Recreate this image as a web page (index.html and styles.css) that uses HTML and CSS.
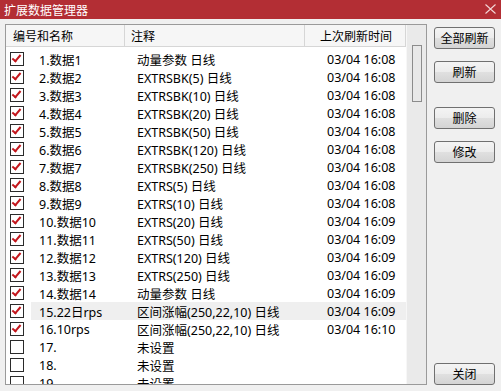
FILE: index.html
```html
<!DOCTYPE html>
<html>
<head>
<meta charset="utf-8">
<link rel="stylesheet" href="styles.css">
</head>
<body>
<div class="win">
  <div class="titlebar">
    <span class="title">扩展数据管理器</span>
    <svg class="close" width="11" height="10" viewBox="0 0 11 10"><path d="M0.5 0.5 L10.5 9.5 M10.5 0.5 L0.5 9.5" stroke="#f3d6d6" stroke-width="1.1" fill="none"/></svg>
  </div>
  <div class="client">
    <div class="list">
      <div class="main">
        <div class="header">
          <div class="hc c1">编号和名称</div>
          <div class="hc c2">注释</div>
          <div class="hc c3">上次刷新时间</div>
        </div>
        <div class="rows">
          <div class="row"><span class="cb on"></span><div class="rest"><span class="name">1.数据1</span><span class="note">动量参数 日线</span><span class="time">03/04 16:08</span></div></div>
          <div class="row"><span class="cb on"></span><div class="rest"><span class="name">2.数据2</span><span class="note">EXTRSBK(5) 日线</span><span class="time">03/04 16:08</span></div></div>
          <div class="row"><span class="cb on"></span><div class="rest"><span class="name">3.数据3</span><span class="note">EXTRSBK(10) 日线</span><span class="time">03/04 16:08</span></div></div>
          <div class="row"><span class="cb on"></span><div class="rest"><span class="name">4.数据4</span><span class="note">EXTRSBK(20) 日线</span><span class="time">03/04 16:08</span></div></div>
          <div class="row"><span class="cb on"></span><div class="rest"><span class="name">5.数据5</span><span class="note">EXTRSBK(50) 日线</span><span class="time">03/04 16:08</span></div></div>
          <div class="row"><span class="cb on"></span><div class="rest"><span class="name">6.数据6</span><span class="note">EXTRSBK(120) 日线</span><span class="time">03/04 16:08</span></div></div>
          <div class="row"><span class="cb on"></span><div class="rest"><span class="name">7.数据7</span><span class="note">EXTRSBK(250) 日线</span><span class="time">03/04 16:08</span></div></div>
          <div class="row"><span class="cb on"></span><div class="rest"><span class="name">8.数据8</span><span class="note">EXTRS(5) 日线</span><span class="time">03/04 16:08</span></div></div>
          <div class="row"><span class="cb on"></span><div class="rest"><span class="name">9.数据9</span><span class="note">EXTRS(10) 日线</span><span class="time">03/04 16:08</span></div></div>
          <div class="row"><span class="cb on"></span><div class="rest"><span class="name">10.数据10</span><span class="note">EXTRS(20) 日线</span><span class="time">03/04 16:09</span></div></div>
          <div class="row"><span class="cb on"></span><div class="rest"><span class="name">11.数据11</span><span class="note">EXTRS(50) 日线</span><span class="time">03/04 16:09</span></div></div>
          <div class="row"><span class="cb on"></span><div class="rest"><span class="name">12.数据12</span><span class="note">EXTRS(120) 日线</span><span class="time">03/04 16:09</span></div></div>
          <div class="row"><span class="cb on"></span><div class="rest"><span class="name">13.数据13</span><span class="note">EXTRS(250) 日线</span><span class="time">03/04 16:09</span></div></div>
          <div class="row"><span class="cb on"></span><div class="rest"><span class="name">14.数据14</span><span class="note">动量参数 日线</span><span class="time">03/04 16:09</span></div></div>
          <div class="row"><span class="cb on"></span><div class="rest hot"><span class="name">15.22日rps</span><span class="note">区间涨幅(250,22,10) 日线</span><span class="time">03/04 16:09</span></div></div>
          <div class="row"><span class="cb on"></span><div class="rest"><span class="name">16.10rps</span><span class="note">区间涨幅(250,22,10) 日线</span><span class="time">03/04 16:10</span></div></div>
          <div class="row"><span class="cb"></span><div class="rest"><span class="name">17.</span><span class="note">未设置</span><span class="time"></span></div></div>
          <div class="row"><span class="cb"></span><div class="rest"><span class="name">18.</span><span class="note">未设置</span><span class="time"></span></div></div>
          <div class="row"><span class="cb"></span><div class="rest"><span class="name">19.</span><span class="note">未设置</span><span class="time"></span></div></div>
        </div>
      </div>
      <div class="vscroll"><div class="thumb"></div></div>
    </div>
    <div class="buttons">
      <div class="btn">全部刷新</div>
      <div class="btn g12">刷新</div>
      <div class="btn g24">删除</div>
      <div class="btn g12">修改</div>
      <div class="btn last">关闭</div>
    </div>
  </div>
</div>
</body>
</html>
```
FILE: styles.css
```css
html, body {
  margin: 0;
  padding: 0;
  width: 501px;
  height: 391px;
  overflow: hidden;
  background: #f0f0f0;
  font-family: "Noto Sans", "Noto Sans CJK SC", sans-serif;
  font-size: 12.5px;
  color: #000;
}
.win {
  width: 501px;
  height: 391px;
  display: flex;
  flex-direction: column;
}
.titlebar {
  height: 19px;
  flex: none;
  background: #b32e34;
  display: flex;
  align-items: center;
  padding: 0 5px 0 4px;
  justify-content: space-between;
}
.title {
  color: #fff;
  font-family: "Noto Sans CJK SC", sans-serif;
  font-size: 12px;
  line-height: 19px;
}
.close {
  margin-top: -2px;
}
.client {
  flex: 1;
  display: flex;
  padding: 5px 6px 6px 5px;
  gap: 7px;
  min-height: 0;
}
.list {
  width: 420px;
  border: 1px solid #9a9a9a;
  background: #fff;
  display: flex;
  overflow: hidden;
}
.main {
  width: 400px;
  display: flex;
  flex-direction: column;
  overflow: hidden;
}
.header {
  display: flex;
  height: 21px;
  flex: none;
  background: #f6f6f6;
  border-bottom: 1px solid #d6d6d6;
}
.hc {
  font-family: "Noto Sans CJK SC", sans-serif;
  font-size: 12px;
  line-height: 21px;
  border-right: 1px solid #d6d6d6;
  box-sizing: border-box;
  white-space: nowrap;
}
.c1 { width: 119px; padding-left: 7px; }
.c2 { width: 180px; padding-left: 6px; }
.c3 { width: 101px; padding-left: 15px; }
.rows {
  padding-top: 3px;
  display: flex;
  flex-direction: column;
}
.row {
  height: 18px;
  flex: none;
  display: flex;
  align-items: center;
}
.cb {
  width: 12px;
  height: 12px;
  border: 1px solid #2a2a2a;
  margin-left: 4px;
  margin-right: 7px;
  background: #fff;
  flex: none;
  position: relative;
}
.cb.on::after {
  content: "";
  position: absolute;
  left: 2px;
  top: 0px;
  width: 3px;
  height: 7px;
  border-right: 2px solid #c3161c;
  border-bottom: 2px solid #c3161c;
  transform: translate(1px, 0px) rotate(40deg);
}
.rest {
  flex: 1;
  height: 18px;
  display: flex;
  align-items: center;
  white-space: nowrap;
}
.rest.hot {
  background: #efefef;
}
.name {
  width: 98px;
  padding-left: 8px;
  box-sizing: border-box;
}
.note {
  width: 180px;
  padding-left: 8px;
  box-sizing: border-box;
}
.time {
  padding-left: 18px;
}
.vscroll {
  width: 20px;
  flex: none;
  background: #eaeaea;
  border-left: 1px solid #f7f7f7;
  box-sizing: border-box;
  position: relative;
}
.thumb {
  position: absolute;
  left: 5px;
  top: 20px;
  width: 10px;
  height: 57px;
  border: 1px solid #8c8c8c;
  box-sizing: border-box;
  background: #e9e9e9;
}
.buttons {
  width: 61px;
  display: flex;
  flex-direction: column;
  padding-top: 3px;
}
.btn {
  height: 22px;
  box-sizing: border-box;
  border: 1px solid #707070;
  border-radius: 3px;
  background: linear-gradient(#f4f4f4 0%, #ececec 50%, #e0e0e0 51%, #d4d4d4 100%);
  text-align: center;
  font-family: "Noto Sans CJK SC", sans-serif;
  font-size: 12px;
  line-height: 20px;
  flex: none;
}
.g12 { margin-top: 12px; }
.g24 { margin-top: 24px; }
.last { margin-top: auto; }
```
